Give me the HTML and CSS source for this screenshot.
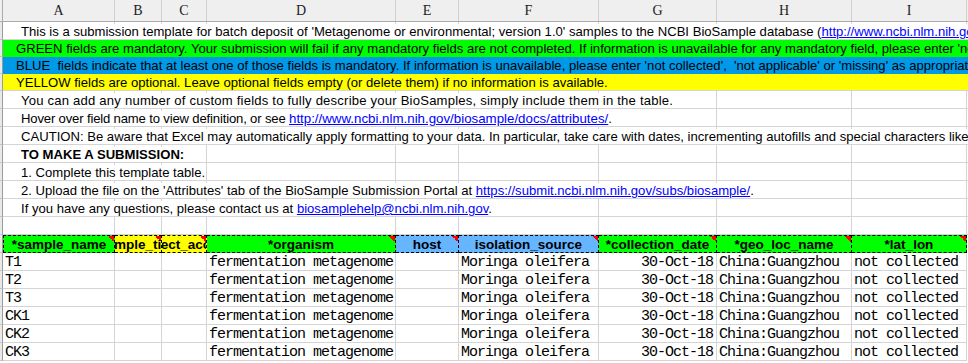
FILE: index.html
```html
<!DOCTYPE html>
<html lang="en">
<head>
    <meta charset="UTF-8">
    <title>MIMS.me.miscellaneous.1.0</title>
    <link rel="stylesheet" href="styles.css">
</head>
<body>
    <div class="sheet">
        <!-- column letters -->
        <div class="colbar">
            <div class="corner"></div>
            <div class="ch ca">A</div>
            <div class="ch cb">B</div>
            <div class="ch cc">C</div>
            <div class="ch cd">D</div>
            <div class="ch ce">E</div>
            <div class="ch cf">F</div>
            <div class="ch cg">G</div>
            <div class="ch chh">H</div>
            <div class="ch ci">I</div>
        </div>

        <!-- instructions -->
        <div class="row"><div class="rh"></div><div class="line"><span class="t ind">This is a submission template for batch deposit of 'Metagenome or environmental; version 1.0' samples to the NCBI BioSample database (<a href="#">http://www.ncbi.nlm.nih.gov/biosample/</a>).</span></div></div>
        <div class="row short"><div class="rh"></div><div class="line fill green"><span class="t">GREEN fields are mandatory. Your submission will fail if any mandatory fields are not completed. If information is unavailable for any mandatory field, please enter 'not collected', 'not applicable' or 'missing' as appropriate.</span></div></div>
        <div class="row short"><div class="rh"></div><div class="line fill blue"><span class="t">BLUE&nbsp; fields indicate that at least one of those fields is mandatory. If information is unavailable, please enter 'not collected',&nbsp; 'not applicable' or 'missing' as appropriate.</span></div></div>
        <div class="row short"><div class="rh"></div><div class="line fill yellow last"><span class="t">YELLOW fields are optional. Leave optional fields empty (or delete them) if no information is available.</span></div></div>
        <div class="row"><div class="rh"></div><div class="line wide"><span class="t ind">You can add any number of custom fields to fully describe your BioSamples, simply include them in the table.</span></div></div>
        <div class="row"><div class="rh"></div><div class="line narrow"><span class="t ind">Hover over field name to view definition, or see <a href="#">http://www.ncbi.nlm.nih.gov/biosample/docs/attributes/</a>.</span></div></div>
        <div class="row"><div class="rh"></div><div class="line"><span class="t ind">CAUTION: Be aware that Excel may automatically apply formatting to your data. In particular, take care with dates, incrementing autofills and special characters like / or -. Doublecheck that your text file is accurate before uploading to BioSample.</span></div></div>
        <div class="row"><div class="rh"></div><div class="line"><span class="t ind bold">TO MAKE A SUBMISSION:</span></div></div>
        <div class="row"><div class="rh"></div><div class="line"><span class="t ind">1. Complete this template table.</span></div></div>
        <div class="row"><div class="rh"></div><div class="line"><span class="t ind">2. Upload the file on the 'Attributes' tab of the BioSample Submission Portal at <a href="#">https://submit.ncbi.nlm.nih.gov/subs/biosample/</a>.</span></div></div>
        <div class="row"><div class="rh"></div><div class="line"><span class="t ind">If you have any questions, please contact us at <a href="#">biosamplehelp@ncbi.nlm.nih.gov</a>.</span></div></div>
        <div class="row"><div class="rh"></div><div class="line"></div></div>

        <!-- attribute table -->
        <div class="row head">
            <div class="rh"></div>
            <div class="hc ca g first"><span>*sample_name</span></div>
            <div class="hc cb y"><span>sample_title</span></div>
            <div class="hc cc y"><span>bioproject_accession</span></div>
            <div class="hc cd g"><span>*organism</span></div>
            <div class="hc ce b"><span>host</span></div>
            <div class="hc cf b"><span>isolation_source</span></div>
            <div class="hc cg g"><span>*collection_date</span></div>
            <div class="hc chh g"><span>*geo_loc_name</span></div>
            <div class="hc ci g"><span>*lat_lon</span></div>
        </div>

        <div class="row data"><div class="rh"></div><div class="c ca">T1</div><div class="c cb"></div><div class="c cc"></div><div class="c cd">fermentation metagenome</div><div class="c ce"></div><div class="c cf">Moringa oleifera</div><div class="c cg num">30-Oct-18</div><div class="c chh">China:Guangzhou</div><div class="c ci">not collected</div></div>
        <div class="row data"><div class="rh"></div><div class="c ca">T2</div><div class="c cb"></div><div class="c cc"></div><div class="c cd">fermentation metagenome</div><div class="c ce"></div><div class="c cf">Moringa oleifera</div><div class="c cg num">30-Oct-18</div><div class="c chh">China:Guangzhou</div><div class="c ci">not collected</div></div>
        <div class="row data"><div class="rh"></div><div class="c ca">T3</div><div class="c cb"></div><div class="c cc"></div><div class="c cd">fermentation metagenome</div><div class="c ce"></div><div class="c cf">Moringa oleifera</div><div class="c cg num">30-Oct-18</div><div class="c chh">China:Guangzhou</div><div class="c ci">not collected</div></div>
        <div class="row data"><div class="rh"></div><div class="c ca">CK1</div><div class="c cb"></div><div class="c cc"></div><div class="c cd">fermentation metagenome</div><div class="c ce"></div><div class="c cf">Moringa oleifera</div><div class="c cg num">30-Oct-18</div><div class="c chh">China:Guangzhou</div><div class="c ci">not collected</div></div>
        <div class="row data"><div class="rh"></div><div class="c ca">CK2</div><div class="c cb"></div><div class="c cc"></div><div class="c cd">fermentation metagenome</div><div class="c ce"></div><div class="c cf">Moringa oleifera</div><div class="c cg num">30-Oct-18</div><div class="c chh">China:Guangzhou</div><div class="c ci">not collected</div></div>
        <div class="row data"><div class="rh"></div><div class="c ca">CK3</div><div class="c cb"></div><div class="c cc"></div><div class="c cd">fermentation metagenome</div><div class="c ce"></div><div class="c cf">Moringa oleifera</div><div class="c cg num">30-Oct-18</div><div class="c chh">China:Guangzhou</div><div class="c ci">not collected</div></div>
    </div>
</body>
</html>
```

FILE: styles.css
```css
* {
    margin: 0;
    padding: 0;
    box-sizing: border-box;
}

html, body {
    width: 968px;
    height: 363px;
    overflow: hidden;
    background: #fff;
}

.sheet {
    width: 968px;
    font-family: "Liberation Sans", Arial, sans-serif;
    font-size: 13.1px;
    color: #000;
}

/* column widths */
.ca { width: 112px; }
.cb { width: 47px; }
.cc { width: 45px; }
.cd { width: 189px; }
.ce { width: 63px; }
.cf { width: 140px; }
.cg { width: 118px; }
.chh { width: 135px; }
.ci { width: 115px; }

/* column letters bar */
.colbar {
    display: flex;
    height: 22px;
    background: #efefef;
    border-bottom: 1px solid #ababab;
}

.corner {
    width: 3px;
    border-right: 1px solid #ababab;
}

.ch {
    flex-shrink: 0;
    border-right: 1px solid #cfcfcf;
    text-align: center;
    line-height: 21px;
    font-family: "Liberation Serif", serif;
    font-size: 14px;
    color: #222;
}

/* rows */
.row {
    display: flex;
    height: 18px;
}

.row.short {
    height: 17px;
}

.rh {
    width: 3px;
    flex-shrink: 0;
    background: #e9e9e9;
    border-right: 1px solid #9b9b9b;
    border-bottom: 1px solid #c4c4c4;
}

.line {
    flex: 1;
    overflow: hidden;
    white-space: nowrap;
    line-height: 20px;
    border-bottom: 1px solid #d4d4d4;
    background-image:
        linear-gradient(#d4d4d4, #d4d4d4), linear-gradient(#d4d4d4, #d4d4d4),
        linear-gradient(#d4d4d4, #d4d4d4), linear-gradient(#d4d4d4, #d4d4d4),
        linear-gradient(#d4d4d4, #d4d4d4), linear-gradient(#d4d4d4, #d4d4d4),
        linear-gradient(#d4d4d4, #d4d4d4), linear-gradient(#d4d4d4, #d4d4d4),
        linear-gradient(#d4d4d4, #d4d4d4);
    background-size: 1px 100%;
    background-repeat: no-repeat;
    background-position: 111px 0, 158px 0, 203px 0, 392px 0, 455px 0,
        595px 0, 713px 0, 848px 0, 963px 0;
}

.line.wide {
    letter-spacing: 0.2px;
}

.line.narrow {
    letter-spacing: -0.16px;
}

.line.narrow a {
    letter-spacing: 0;
    font-size: 13.3px;
}

.t {
    background: #fff;
    padding-left: 13px;
}

.t.ind {
    padding-left: 18px;
}

.bold {
    font-weight: bold;
}

a {
    color: #0000ff;
    text-decoration: underline;
}

.fill {
    background-image: none;
    line-height: 18px;
    border-bottom-color: transparent;
}

.fill .t {
    background: none;
}

.fill.last {
    border-bottom-color: #d4d4d4;
}

.green { background-color: #00ff00; }
.blue { background-color: #0099e8; }
.yellow { background-color: #ffff00; }

/* attribute header */
.hc {
    flex-shrink: 0;
    display: flex;
    justify-content: center;
    overflow: hidden;
    white-space: nowrap;
    font-weight: bold;
    font-size: 13.5px;
    line-height: 17px;
    border-top: 1px dashed #000;
    border-bottom: 1px dashed #000;
    border-right: 1px dashed #000;
    background-image: linear-gradient(to bottom left, #f00 50%, transparent 50%);
    background-size: 6px 6px;
    background-repeat: no-repeat;
    background-position: right top;
}

.hc.first {
    border-left: 1px dashed #000;
}

.hc.g { background-color: #00ff00; }
.hc.y { background-color: #ffff00; }
.hc.b { background-color: #66b5ff; }

/* data cells */
.c {
    flex-shrink: 0;
    overflow: hidden;
    white-space: nowrap;
    padding: 0 2px 0 2px;
    border-right: 1px solid #d4d4d4;
    border-bottom: 1px solid #d4d4d4;
    font-family: "Liberation Mono", monospace;
    font-size: 15px;
    letter-spacing: -1px;
    line-height: 20px;
}

.c.num {
    text-align: right;
    padding-right: 3px;
}
```
